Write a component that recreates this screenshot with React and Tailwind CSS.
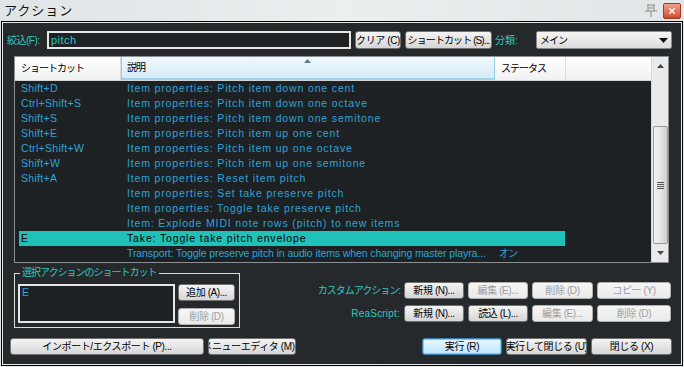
import { X } from 'lucide-react';

const FONT = { fontFamily: '"Liberation Sans", "Noto Sans CJK JP", sans-serif' };

const ROWS = [
  ['Shift+D', 'Item properties: Pitch item down one cent', ''],
  ['Ctrl+Shift+S', 'Item properties: Pitch item down one octave', ''],
  ['Shift+S', 'Item properties: Pitch item down one semitone', ''],
  ['Shift+E', 'Item properties: Pitch item up one cent', ''],
  ['Ctrl+Shift+W', 'Item properties: Pitch item up one octave', ''],
  ['Shift+W', 'Item properties: Pitch item up one semitone', ''],
  ['Shift+A', 'Item properties: Reset item pitch', ''],
  ['', 'Item properties: Set take preserve pitch', ''],
  ['', 'Item properties: Toggle take preserve pitch', ''],
  ['', 'Item: Explode MIDI note rows (pitch) to new items', ''],
  ['E', 'Take: Toggle take pitch envelope', '', true],
  ['', 'Transport: Toggle preserve pitch in audio items when changing master playra...', 'オン', false, true],
];

export default function App() {
  return (
    <div className="w-[684px] h-[367px] overflow-hidden bg-gradient-to-r from-[#dfe4e6] via-[#eceff0] to-[#e2e6e8] flex flex-col" style={FONT}>
      <TitleBar />
      <div className="mx-[1px] flex-1 border border-black mb-[1px]">
        <div className="h-full border border-[#e8e8e8] bg-[#25292b] pt-[8px] pl-[4px] flex flex-col">
          <FilterRow />
          <ActionList />
          <BottomArea />
          <div className="flex items-center mt-[10px] ml-[3px]">
            <Btn className="w-[194px]">インポート/エクスポート (P)...</Btn>
            <Btn className="w-[88px] ml-[4px]">メニューエディタ (M)...</Btn>
            <Btn primary className="w-[80px] ml-[126px]">実行 (R)</Btn>
            <Btn className="w-[81px] ml-[4px]">実行して閉じる (U)</Btn>
            <Btn className="w-[81px] ml-[4px]">閉じる (X)</Btn>
          </div>
        </div>
      </div>
    </div>
  );
}

function TitleBar() {
  return (
    <div className="h-[21px] flex items-center justify-between pl-[4px] pr-[3px]">
      <span className="text-[13px] text-[#111] tracking-[1px]">アクション</span>
      <div className="flex items-center gap-[5px]">
        <svg width="14" height="14" viewBox="0 0 14 14" className="text-[#8a8a8a]">
          <path d="M3 1h8M4 1v6M10 1v6M1 7h12M7 7v6M5 4h4" stroke="currentColor" strokeWidth="1" fill="none" />
        </svg>
        <div className="w-[18px] h-[16px] rounded-[2px] bg-gradient-to-b from-[#f0a08a] to-[#d2472c] border border-[#9b3a26] flex items-center justify-center">
          <X className="w-[10px] h-[10px] text-white" strokeWidth={3} />
        </div>
      </div>
    </div>
  );
}

function FilterRow() {
  return (
    <div className="flex items-center h-[18px]">
      <span className="w-[40px] text-[10px] tracking-[-0.5px] text-[#2fc8c0]">絞込(F):</span>
      <div className="w-[304px] h-[18px] border-2 border-[#e6e6e6] bg-[#1e2224] flex items-center px-[2px] text-[11px] tracking-[0.5px] text-[#2fc8c0]">
        pitch
      </div>
      <Btn className="w-[46px] ml-[4px] h-[18px]">クリア (C)</Btn>
      <Btn className="w-[87px] ml-[4px] h-[18px] tracking-[-0.9px]">ショートカット (S)...</Btn>
      <span className="w-[41px] ml-[3px] text-[10px] text-[#2fc8c0]">分類:</span>
      <div className="w-[136px] h-[18px] rounded-[2px] border border-[#8a8a8a] bg-gradient-to-b from-[#f6f6f6] to-[#dcdcdc] flex items-center justify-between px-[3px] text-[10px] tracking-[-1px] text-black">
        <span>メイン</span>
        <svg width="9" height="5" viewBox="0 0 9 5"><path d="M0 0h9L4.5 5z" fill="#111" /></svg>
      </div>
    </div>
  );
}

function ActionList() {
  return (
    <div className="ml-[7px] mt-[7px] w-[655px] h-[207px] border border-[#8c9094] bg-[#1d2124] flex">
      <div className="flex-1 flex flex-col min-w-0">
        <div className="h-[24px] flex text-[10px] tracking-[-1px] text-black bg-gradient-to-b from-white to-[#f0f1f2] border-b border-[#d5d5d5]">
          <div className="w-[106px] flex items-center pl-[6px] border-r border-[#dcdcdc]">ショートカット</div>
          <div className="w-[374px] relative flex items-center pl-[5px] bg-gradient-to-b from-[#f0f8fc] to-[#d6ecf7] border-x border-[#93cbe8] border-b-2 border-b-[#9fd3ec]">
            説明
            <svg width="7" height="4" viewBox="0 0 7 4" className="absolute left-[182px] top-[2px]"><path d="M0 4L3.5 0L7 4z" fill="#5a7d92" /></svg>
          </div>
          <div className="w-[71px] flex items-center pl-[6px] border-r border-[#dcdcdc]">ステータス</div>
          <div className="flex-1" />
        </div>
        <div className="pl-[4px]">
          {ROWS.map(([k, d, s, sel, narrow], i) => (
            <div
              key={i}
              className={`h-[15px] w-[546px] flex items-center text-[10.5px] whitespace-nowrap ${sel ? 'bg-[#20c1b8] text-black' : 'text-[#2fa3d6]'}`}
            >
              <span className="w-[106px] pl-[2px] tracking-[0.3px]">{k}</span>
              <span className={`w-[373px] pl-[2px] overflow-hidden ${narrow ? 'tracking-[-0.1px]' : 'tracking-[0.85px]'}`}>{d}</span>
              <span className="pl-[1px] text-[10px] tracking-[-1px]">{s}</span>
            </div>
          ))}
        </div>
      </div>
      <Scrollbar />
    </div>
  );
}

function Scrollbar() {
  return (
    <div className="w-[17px] h-full bg-[#eaeaea] border-l border-[#d8d8d8] flex flex-col items-center">
      <div className="h-[17px] flex items-center justify-center">
        <svg width="7" height="4" viewBox="0 0 7 4"><path d="M0 4L3.5 0L7 4z" fill="#444" /></svg>
      </div>
      <div className="h-[52px]" />
      <div className="w-[15px] h-[118px] rounded-[2px] border border-[#9a9a9a] bg-gradient-to-r from-[#f2f2f2] via-[#e6e6e6] to-[#cfcfcf] flex items-center justify-center">
        <div className="flex flex-col gap-[1px]">
          <div className="w-[7px] h-[1px] bg-[#555]" />
          <div className="w-[7px] h-[1px] bg-[#555]" />
          <div className="w-[7px] h-[1px] bg-[#555]" />
          <div className="w-[7px] h-[1px] bg-[#555]" />
        </div>
      </div>
      <div className="flex-1 flex items-center justify-center">
        <svg width="7" height="4" viewBox="0 0 7 4"><path d="M0 0h7L3.5 4z" fill="#444" /></svg>
      </div>
    </div>
  );
}

function BottomArea() {
  return (
    <div className="flex mt-[10px]">
      <div className="ml-[7px] w-[226px] h-[55px] border border-[#dcdcdc] relative">
        <span className="absolute -top-[8px] left-[5px] px-[2px] bg-[#25292b] text-[10px] tracking-[-1px] text-[#2fc8c0] leading-[14px]">
          選択アクションのショートカット
        </span>
        <div className="flex mt-[10px] ml-[3px]">
          <div className="w-[157px] h-[39px] border-2 border-[#e6e6e6] bg-[#1d2124] text-[10.5px] text-[#2fa3d6] pl-[2px] leading-[12px]">
            E
          </div>
          <div className="ml-[3px] flex flex-col gap-[7px]">
            <Btn className="w-[57px] h-[15px]">追加 (A)...</Btn>
            <Btn disabled className="w-[57px] h-[16px]">削除 (D)</Btn>
          </div>
        </div>
      </div>
      <div className="ml-[4px] flex flex-col gap-[7px] mt-[9px]">
        <div className="flex items-center h-[16px]">
          <span className="w-[160px] text-right pr-[4px] text-[10px] tracking-[-1px] text-[#2fc8c0]">カスタムアクション:</span>
          <Btn className="w-[60px] h-[16px]">新規 (N)...</Btn>
          <Btn disabled className="w-[60px] h-[16px] ml-[4px]">編集 (E)...</Btn>
          <Btn disabled className="w-[61px] h-[16px] ml-[4px]">削除 (D)</Btn>
          <Btn disabled className="w-[74px] h-[16px] ml-[4px]">コピー (Y)</Btn>
        </div>
        <div className="flex items-center h-[16px]">
          <span className="w-[160px] text-right pr-[4px] text-[10px] tracking-[0.2px] text-[#2fc8c0]">ReaScript:</span>
          <Btn className="w-[60px] h-[16px]">新規 (N)...</Btn>
          <Btn className="w-[60px] h-[16px] ml-[4px]">読込 (L)...</Btn>
          <Btn disabled className="w-[61px] h-[16px] ml-[4px]">編集 (E)...</Btn>
          <Btn disabled className="w-[74px] h-[16px] ml-[4px]">削除 (D)</Btn>
        </div>
      </div>
    </div>
  );
}

function Btn({ children, className = '', disabled, primary }) {
  let look = 'border-[#707070] bg-gradient-to-b from-[#f4f4f4] to-[#d6d6d6] text-black';
  if (disabled) look = 'border-[#b0b0b0] bg-gradient-to-b from-[#f6f6f6] to-[#eaeaea] text-[#9e9e9e]';
  if (primary) look = 'border-[#3c7fb1] bg-gradient-to-b from-[#eaf6fd] to-[#bee6fd] text-black shadow-[inset_0_0_0_1px_#6fd0f7]';
  return (
    <div className={`h-[17px] shrink-0 rounded-[3px] border flex items-center justify-center text-[10px] tracking-[-0.4px] whitespace-nowrap overflow-hidden ${look} ${className}`}>
      {children}
    </div>
  );
}
